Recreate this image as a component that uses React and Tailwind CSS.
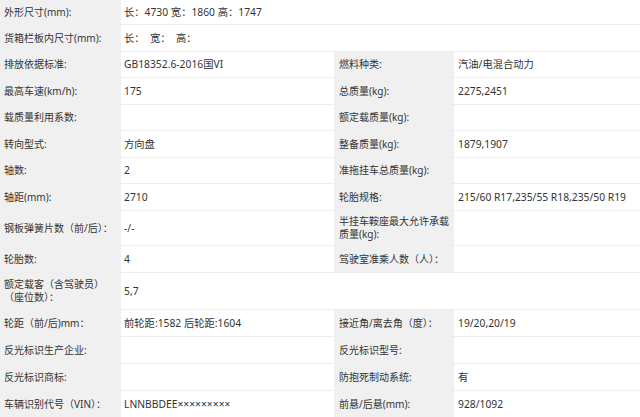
import React from "react";

const rows = [
  { h: "h-[25px]", a: "外形尺寸(mm):", b: "长：4730 宽：1860 高：1747", span: true },
  { h: "h-[27px]", a: "货箱栏板内尺寸(mm):", b: "长：  宽：  高：", span: true },
  { h: "h-[26px]", a: "排放依据标准:", b: "GB18352.6-2016国VI", c: "燃料种类:", d: "汽油/电混合动力" },
  { h: "h-[27px]", a: "最高车速(km/h):", b: "175", c: "总质量(kg):", d: "2275,2451" },
  { h: "h-[26px]", a: "载质量利用系数:", b: "", c: "额定载质量(kg):", d: "" },
  { h: "h-[27px]", a: "转向型式:", b: "方向盘", c: "整备质量(kg):", d: "1879,1907" },
  { h: "h-[26px]", a: "轴数:", b: "2", c: "准拖挂车总质量(kg):", d: "" },
  { h: "h-[27px]", a: "轴距(mm):", b: "2710", c: "轮胎规格:", d: "215/60 R17,235/55 R18,235/50 R19" },
  { h: "h-[35px]", a: "钢板弹簧片数（前/后）：", b: "-/-", c: "半挂车鞍座最大允许承载质量(kg):", d: "" },
  { h: "h-[27px]", a: "轮胎数:", b: "4", c: "驾驶室准乘人数（人）：", d: "" },
  { h: "h-[37px]", a: "额定载客（含驾驶员）\n（座位数）：", b: "5,7", c: "", d: "", blank: true },
  { h: "h-[27px]", a: "轮距（前/后)mm：", b: "前轮距:1582 后轮距:1604", c: "接近角/离去角（度）：", d: "19/20,20/19" },
  { h: "h-[27px]", a: "反光标识生产企业:", b: "", c: "反光标识型号:", d: "" },
  { h: "h-[27px]", a: "反光标识商标:", b: "", c: "防抱死制动系统:", d: "有" },
  { h: "h-[27px]", a: "车辆识别代号（VIN）：", b: "LNNBBDEE×××××××××", c: "前悬/后悬(mm):", d: "928/1092" },
];

const Cell = ({ className, children }) => (
  <div className={`flex items-center leading-[13px] ${className}`}>{children}</div>
);

export default function App() {
  return (
    <div
      className="w-[640px] h-[417px] overflow-hidden bg-white text-[#333]"
      style={{ fontFamily: '"Noto Sans", "Noto Sans CJK SC", sans-serif' }}
    >
      {rows.map((r, i) => (
        <div key={i} className={`flex border-b border-[#eeeeee] ${r.h}`}>
          <Cell className="w-[121px] shrink-0 bg-[#f0f0f0] pl-[4px] text-[10px] whitespace-pre-line">
            {r.a}
          </Cell>
          {r.span ? (
            <Cell className="flex-1 pl-[3px] text-[10.3px] whitespace-pre">{r.b}</Cell>
          ) : (
            <>
              <Cell className="w-[213px] shrink-0 pl-[3px] text-[10.3px]">{r.b}</Cell>
              <Cell
                className={`w-[120px] shrink-0 pl-[5px] text-[10px] ${
                  r.blank ? "bg-white" : "bg-[#f0f0f0]"
                }`}
              >
                {r.c}
              </Cell>
              <Cell className="flex-1 pl-[4px] text-[10.3px] whitespace-nowrap">{r.d}</Cell>
            </>
          )}
        </div>
      ))}
    </div>
  );
}
